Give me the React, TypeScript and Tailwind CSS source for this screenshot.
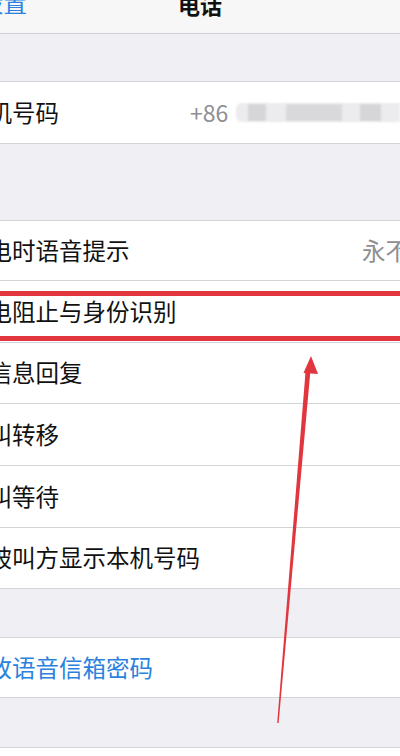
import React from 'react';

const cjk = "font-['Noto_Sans_CJK_SC','Noto_Sans',sans-serif]";

function Row({
  label,
  h,
  last,
  blue,
  children,
}: {
  label: string;
  h: string;
  last?: boolean;
  blue?: boolean;
  children?: React.ReactNode;
}) {
  return (
    <div className={`flex items-center bg-white ${h} ${last ? '' : 'border-b border-[#d4d4d8]'}`}>
      <span
        className={`-ml-[35px] whitespace-nowrap text-[23.5px] leading-none ${
          blue ? 'text-[#2a82de]' : 'text-[#111]'
        }`}
      >
        {label}
      </span>
      {children}
    </div>
  );
}

export default function App() {
  return (
    <main className={`relative w-[400px] h-[756px] overflow-hidden bg-[#efeff4] ${cjk}`}>
      {/* nav bar */}
      <div className="flex h-[34px] items-start overflow-hidden border-b border-[#cfcfd3] bg-[#f7f7f8]">
        <div className="w-[100px]">
          <span className="-ml-[20px] -mt-[9px] block whitespace-nowrap text-[23.5px] leading-none text-[#2a82de]">
            设置
          </span>
        </div>
        <div className="flex-1 text-center">
          <span className="-mt-[7px] block text-[22px] font-bold leading-none text-[#111]">电话</span>
        </div>
        <div className="w-[100px]" />
      </div>

      <div className="h-[47px]" />

      <div className="border-y border-[#d4d4d8]">
        <Row label="本机号码" h="h-[61px]" last>
          <div className="ml-auto flex w-[210px] items-center">
            <span className="text-[23px] leading-none text-[#8e8e93]">+86</span>
            <div className="ml-[8px] flex h-[19px] flex-1 items-center rounded-l-[6px] bg-[#ececee] blur-[1px]">
              <div className="ml-[12px] h-[17px] w-[18px] bg-[#d6d6d8]" />
              <div className="ml-[20px] h-[17px] w-[56px] bg-[#d9d9db]" />
              <div className="ml-[18px] h-[17px] w-[21px] bg-[#d6d6d8]" />
            </div>
          </div>
        </Row>
      </div>

      <div className="h-[76px]" />

      <div className="border-y border-[#d4d4d8]">
        <Row label="来电时语音提示" h="h-[60px]">
          <span className="-mr-[9px] ml-auto whitespace-nowrap text-[23.5px] leading-none text-[#8e8e93]">
            永不
          </span>
        </Row>
        <Row label="来电阻止与身份识别" h="h-[62px]" />
        <Row label="用信息回复" h="h-[61px]" />
        <Row label="呼叫转移" h="h-[62px]" />
        <Row label="呼叫等待" h="h-[62px]" />
        <Row label="向被叫方显示本机号码" h="h-[60px]" last />
      </div>

      <div className="h-[48px]" />

      <div className="border-y border-[#d4d4d8]">
        <Row label="更改语音信箱密码" h="h-[59px]" blue last />
      </div>

      <div className="h-[49px]" />

      <div className="h-[20px] border-t border-[#d4d4d8] bg-white" />

      {/* red highlight annotation */}
      <div className="absolute left-0 top-[291px] h-[50px] w-full border-y-[5px] border-[#e1363d]" />

      {/* red arrow annotation */}
      <svg className="absolute left-0 top-0" width="400" height="756" viewBox="0 0 400 756">
        <polygon points="277.2,723 278.6,723 310.4,371 305.6,371" fill="#e1363d" />
        <polygon points="311,356 318,374 303.5,373" fill="#e1363d" />
      </svg>
    </main>
  );
}
